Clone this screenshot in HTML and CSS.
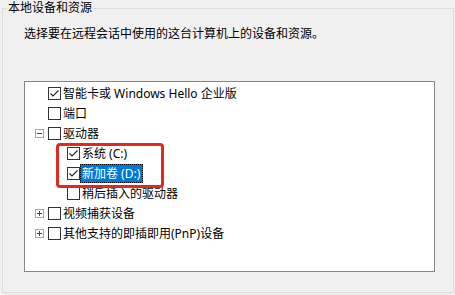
FILE: index.html
```html
<!DOCTYPE html>
<html lang="zh-CN">
<head>
    <meta charset="UTF-8">
    <title>本地设备和资源</title>
    <link rel="stylesheet" href="styles.css">
</head>
<body>
    <fieldset class="group">
        <legend>本地设备和资源</legend>
        <p class="desc">选择要在远程会话中使用的这台计算机上的设备和资源。</p>
        <div class="tree">
            <ul>
                <li class="row">
                    <span class="expander none"></span>
                    <span class="check on"><svg width="11" height="11" viewBox="0 0 11 11"><polyline points="1.5,5.5 4,8 9.5,2.5" /></svg></span>
                    <span class="label">智能卡或 Windows Hello 企业版</span>
                </li>
                <li class="row">
                    <span class="expander none"></span>
                    <span class="check"></span>
                    <span class="label">端口</span>
                </li>
                <li class="row">
                    <span class="expander minus"></span>
                    <span class="check"></span>
                    <span class="label">驱动器</span>
                </li>
                <li class="row child">
                    <span class="check on"><svg width="11" height="11" viewBox="0 0 11 11"><polyline points="1.5,5.5 4,8 9.5,2.5" /></svg></span>
                    <span class="label">系统 (C:)</span>
                </li>
                <li class="row child">
                    <span class="check on"><svg width="11" height="11" viewBox="0 0 11 11"><polyline points="1.5,5.5 4,8 9.5,2.5" /></svg></span>
                    <span class="label selected">新加卷 (D:)</span>
                </li>
                <li class="row child">
                    <span class="check"></span>
                    <span class="label">稍后插入的驱动器</span>
                </li>
                <li class="row">
                    <span class="expander plus"></span>
                    <span class="check"></span>
                    <span class="label">视频捕获设备</span>
                </li>
                <li class="row">
                    <span class="expander plus"></span>
                    <span class="check"></span>
                    <span class="label">其他支持的即插即用(PnP)设备</span>
                </li>
            </ul>
            <div class="highlight-box"></div>
        </div>
    </fieldset>
</body>
</html>
```

FILE: styles.css
```css
body {
    margin: 0;
    background: #f0f0f0;
    color: #000;
    font-family: "Segoe UI", "Noto Sans", "Noto Sans CJK SC", sans-serif;
    font-size: 12px;
    line-height: 16px;
}

.group {
    margin: 0 1px 0 2px;
    padding: 0 0 20px 21px;
    border: 1px solid #dcdcdc;
}

.group legend {
    margin-left: -17px;
    padding: 0 1px;
    line-height: 16px;
}

.desc {
    margin: 10px 0 0;
}

.tree {
    position: relative;
    box-sizing: border-box;
    width: 411px;
    height: 191px;
    margin-top: 39px;
    padding-top: 1px;
    background: #fff;
    border: 1px solid #828790;
}

.tree ul {
    list-style: none;
    margin: 0;
    padding: 0;
}

.row {
    display: flex;
    align-items: center;
    height: 20px;
    padding-left: 10px;
}

.row.child {
    padding-left: 42px;
}

.expander {
    position: relative;
    box-sizing: border-box;
    width: 9px;
    height: 9px;
    margin-right: 4px;
    border: 1px solid #a6a6a6;
}

.expander.none {
    border-color: transparent;
}

.expander.minus::before,
.expander.plus::before {
    content: "";
    position: absolute;
    left: 1px;
    top: 3px;
    width: 5px;
    height: 1px;
    background: #444;
}

.expander.plus::after {
    content: "";
    position: absolute;
    left: 3px;
    top: 1px;
    width: 1px;
    height: 5px;
    background: #444;
}

.check {
    display: flex;
    align-items: center;
    justify-content: center;
    box-sizing: border-box;
    width: 13px;
    height: 13px;
    border: 1px solid #333;
    background: #fff;
}

.check svg polyline {
    fill: none;
    stroke: #222;
    stroke-width: 1.1;
}

.label {
    height: 17px;
    line-height: 17px;
    padding: 0 1px;
    border: 1px solid transparent;
    white-space: nowrap;
}

.label.selected {
    padding-right: 2px;
    background: #0078d7;
    color: #fff;
    border: 1px dotted #000;
}

.highlight-box {
    position: absolute;
    left: 31px;
    top: 61px;
    width: 108px;
    height: 45px;
    box-sizing: border-box;
    border: 3px solid #e02a20;
    border-radius: 4px;
}
```
